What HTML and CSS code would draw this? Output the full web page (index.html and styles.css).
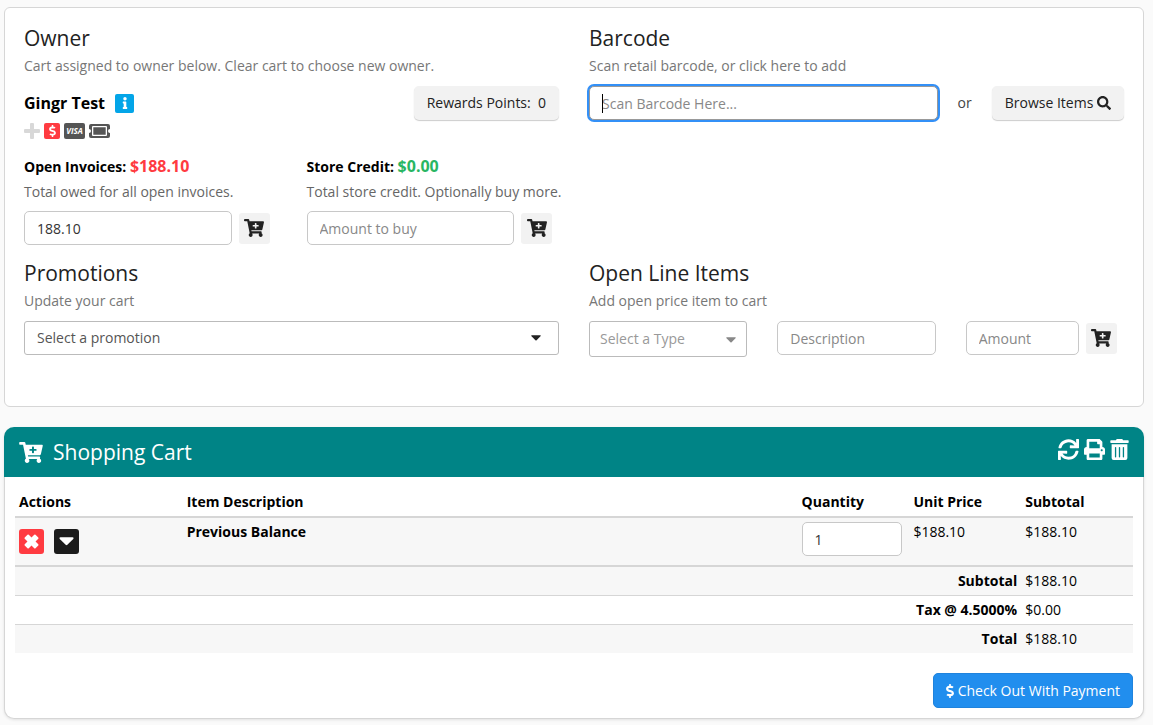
FILE: index.html
```html
<!DOCTYPE html>
<html lang="en">
<head>
    <meta charset="UTF-8">
    <meta name="viewport" content="width=device-width, initial-scale=1.0">
    <link rel="stylesheet" href="styles.css">
    <title>Point of Sale</title>
</head>
<body>
    <!-- icon sprite -->
    <svg class="sprite">
        <symbol id="cart-plus" viewBox="0 0 576 512"><path d="M504.717 320H211.572l6.545 32h268.418c15.401 0 26.816 14.301 23.403 29.319l-5.517 24.276C523.112 414.668 536 433.828 536 456c0 31.202-25.519 56.444-56.824 55.994-29.823-.429-54.35-24.631-55.155-54.447-.44-16.287 6.085-31.049 16.803-41.548H231.176C241.553 426.165 248 440.326 248 456c0 31.813-26.528 57.431-58.67 55.938-28.54-1.325-51.751-24.385-53.251-52.917-1.158-22.034 10.436-41.455 28.051-51.586L93.883 64H24C10.745 64 0 53.255 0 40V24C0 10.745 10.745 0 24 0h102.529c11.401 0 21.228 8.021 23.513 19.19L159.208 64H551.99c15.401 0 26.816 14.301 23.403 29.319l-47.273 208C525.637 312.246 515.923 320 504.717 320zM408 168h-48v-40c0-8.837-7.163-16-16-16h-16c-8.837 0-16 7.163-16 16v40h-48c-8.837 0-16 7.163-16 16v16c0 8.837 7.163 16 16 16h48v40c0 8.837 7.163 16 16 16h16c8.837 0 16-7.163 16-16v-40h48c8.837 0 16-7.163 16-16v-16c0-8.837-7.163-16-16-16z"/></symbol>
        <symbol id="search" viewBox="0 0 512 512"><path d="M505 442.7L405.3 343c-4.5-4.5-10.6-7-17-7H372c27.6-35.3 44-79.7 44-128C416 93.1 322.9 0 208 0S0 93.1 0 208s93.1 208 208 208c48.3 0 92.7-16.4 128-44v16.3c0 6.4 2.5 12.5 7 17l99.7 99.7c9.4 9.4 24.6 9.4 33.9 0l28.3-28.3c9.4-9.4 9.4-24.6.1-34zM208 336c-70.7 0-128-57.2-128-128 0-70.7 57.2-128 128-128 70.7 0 128 57.2 128 128 0 70.7-57.2 128-128 128z"/></symbol>
        <symbol id="times" viewBox="0 0 16 16"><path d="M3.700.8q.7-.7 1.400 0L8 3.700 10.900.8q.7-.7 1.400 0l2.900 2.900q.7.7 0 1.400L12.300 8l2.900 2.900q.7.7 0 1.400l-2.900 2.900q-.7.7-1.400 0L8 12.300l-2.900 2.900q-.7.7-1.400 0L.8 12.300q-.7-.7 0-1.400L3.700 8 .8 5.100q-.7-.7 0-1.400z"/></symbol>
        <symbol id="dollar" viewBox="0 0 288 512"><path d="M209.2 233.4l-108-31.6C88.7 198.2 80 186.5 80 173.5c0-16.3 13.2-29.5 29.5-29.5h66.3c12.2 0 24.2 3.7 34.2 10.5 6.1 4.1 14.3 3.1 19.5-2l34.8-34c7.1-6.9 6.1-18.4-1.8-24.5C238 74.8 207.4 64.1 176 64V16c0-8.8-7.2-16-16-16h-32c-8.8 0-16 7.2-16 16v48h-2.5C45.8 64-5.4 118.7.5 183.6c4.2 46.1 39.4 83.6 83.8 96.6l102.5 30c12.5 3.7 21.2 15.3 21.2 28.3 0 16.3-13.2 29.5-29.5 29.5h-66.3C100 368 88 364.3 78 357.5c-6.1-4.1-14.3-3.1-19.5 2l-34.8 34c-7.1 6.9-6.1 18.4 1.8 24.5 24.5 19.2 55.1 29.9 86.5 30v48c0 8.8 7.2 16 16 16h32c8.8 0 16-7.2 16-16v-48.2c46.6-.9 90.3-28.6 105.7-72.7 21.5-61.6-14.6-124.8-72.5-141.7z"/></symbol>
        <symbol id="info" viewBox="0 0 192 512"><path d="M20 424.229h20V279.771H20c-11.046 0-20-8.954-20-20V212c0-11.046 8.954-20 20-20h112c11.046 0 20 8.954 20 20v212.229h20c11.046 0 20 8.954 20 20V492c0 11.046-8.954 20-20 20H20c-11.046 0-20-8.954-20-20v-47.771c0-11.046 8.954-20 20-20zM96 0C56.235 0 24 32.235 24 72s32.235 72 72 72 72-32.235 72-72S135.764 0 96 0z"/></symbol>
        <symbol id="print" viewBox="0 0 512 512"><path d="M448 192V77.25c0-8.49-3.37-16.62-9.37-22.63L393.37 9.37c-6-6-14.14-9.37-22.63-9.37H96C78.33 0 64 14.33 64 32v160c-35.35 0-64 28.65-64 64v112c0 8.84 7.16 16 16 16h48v96c0 17.67 14.33 32 32 32h320c17.67 0 32-14.33 32-32v-96h48c8.84 0 16-7.16 16-16V256c0-35.35-28.65-64-64-64zm-64 256H128v-96h256v96zm0-224H128V64h192v48c0 8.84 7.16 16 16 16h48v96zm48 72c-13.25 0-24-10.75-24-24 0-13.26 10.75-24 24-24s24 10.74 24 24c0 13.25-10.75 24-24 24z"/></symbol>
        <symbol id="trash" viewBox="0 0 448 512"><path d="M32 464a48 48 0 0 0 48 48h288a48 48 0 0 0 48-48V128H32zm272-256a16 16 0 0 1 32 0v224a16 16 0 0 1-32 0zm-96 0a16 16 0 0 1 32 0v224a16 16 0 0 1-32 0zm-96 0a16 16 0 0 1 32 0v224a16 16 0 0 1-32 0zM432 32H312l-9.4-18.7A24 24 0 0 0 281.1 0H166.8a23.72 23.72 0 0 0-21.4 13.3L136 32H16A16 16 0 0 0 0 48v32a16 16 0 0 0 16 16h416a16 16 0 0 0 16-16V48a16 16 0 0 0-16-16z"/></symbol>
        <symbol id="sync" viewBox="0 0 512 512"><path d="M440.65 12.57l4 82.77A247.16 247.16 0 0 0 255.83 8C134.73 8 33.91 94.92 12.29 209.82A12 12 0 0 0 24.09 224h49.05a12 12 0 0 0 11.67-9.26 175.91 175.91 0 0 1 317-56.94l-101.46-4.86a12 12 0 0 0-12.57 12v47.41a12 12 0 0 0 12 12H500a12 12 0 0 0 12-12V12a12 12 0 0 0-12-12h-47.37a12 12 0 0 0-11.98 12.57zM255.83 432a175.61 175.61 0 0 1-146-77.8l101.8 4.87a12 12 0 0 0 12.57-12v-47.4a12 12 0 0 0-12-12H12a12 12 0 0 0-12 12V500a12 12 0 0 0 12 12h47.35a12 12 0 0 0 12-12.6l-4.15-82.57A247.17 247.17 0 0 0 255.83 504c121.11 0 221.93-86.92 243.55-201.82a12 12 0 0 0-11.8-14.18h-49.05a12 12 0 0 0-11.67 9.26A175.86 175.86 0 0 1 255.83 432z"/></symbol>
        <symbol id="caret" viewBox="0 0 16 9"><path d="M1.5 0h13c1 0 1.400 1 .7 1.700l-6.300 6.300c-.6.600-1.200.600-1.800 0L.8 1.700C.1 1 .5 0 1.500 0z"/></symbol>
        <symbol id="plus" viewBox="0 0 16 16"><path d="M6 1q0-1 1-1h2q1 0 1 1v5h5q1 0 1 1v2q0 1-1 1h-5v5q0 1-1 1H7q-1 0-1-1v-5H1q-1 0-1-1V7q0-1 1-1h5z"/></symbol>
        <symbol id="ticket" viewBox="0 0 21 14"><path fill-rule="evenodd" d="M2 0h17q2 0 2 2v3a2 2 0 0 0 0 4v3q0 2-2 2H2q-2 0-2-2V9a2 2 0 0 0 0-4V2q0-2 2-2zM4 2q-1 0-1 1v8q0 1 1 1h13q1 0 1-1V3q0-1-1-1zM4.300 3.300h12.400v7.400H4.300z"/></symbol>
    </svg>

    <div class="panel owner-panel">
        <section>
            <h2>Owner</h2>
            <p class="hint">Cart assigned to owner below. Clear cart to choose new owner.</p>
            <div class="owner-row">
                <div class="owner-name">
                    <strong>Gingr Test</strong>
                    <button class="info-button" aria-label="Owner info"><svg><use href="#info"/></svg></button>
                </div>
                <button class="button">Rewards Points: &nbsp;0</button>
            </div>
            <div class="owner-icons">
                <svg class="icon-plus"><use href="#plus"/></svg>
                <span class="icon-dollar"><svg><use href="#dollar"/></svg></span>
                <span class="icon-visa">VISA</span>
                <svg class="icon-ticket"><use href="#ticket"/></svg>
            </div>
            <div class="balances">
                <div>
                    <label class="balance-label" for="invoices">Open Invoices: <span class="owed">$188.10</span></label>
                    <p class="hint dark">Total owed for all open invoices.</p>
                    <div class="field-group">
                        <input class="field" id="invoices" type="text" value="188.10">
                        <button class="add-button" aria-label="Pay invoices"><svg><use href="#cart-plus"/></svg></button>
                    </div>
                </div>
                <div>
                    <label class="balance-label" for="credit">Store Credit: <span class="credit">$0.00</span></label>
                    <p class="hint dark">Total store credit. Optionally buy more.</p>
                    <div class="field-group">
                        <input class="field" id="credit" type="text" placeholder="Amount to buy">
                        <button class="add-button" aria-label="Buy credit"><svg><use href="#cart-plus"/></svg></button>
                    </div>
                </div>
            </div>
        </section>

        <section>
            <h2>Barcode</h2>
            <p class="hint">Scan retail barcode, or click here to add</p>
            <div class="barcode-row">
                <div class="barcode-field">
                    <input class="field active" type="text" placeholder="Scan Barcode Here..." aria-label="Barcode">
                </div>
                <span>or</span>
                <button class="button">Browse Items <svg class="icon-search"><use href="#search"/></svg></button>
            </div>
        </section>

        <section>
            <h2>Promotions</h2>
            <p class="hint">Update your cart</p>
            <div class="select-box promotion">
                <select class="field" aria-label="Promotion">
                    <option>Select a promotion</option>
                </select>
                <svg class="caret"><use href="#caret"/></svg>
            </div>
        </section>

        <section>
            <h2>Open Line Items</h2>
            <p class="hint">Add open price item to cart</p>
            <div class="line-items">
                <div class="select-box item-type">
                    <select class="field" aria-label="Type">
                        <option>Select a Type</option>
                    </select>
                    <svg class="caret"><use href="#caret"/></svg>
                </div>
                <input class="field" type="text" placeholder="Description" aria-label="Description">
                <div class="field-group">
                    <input class="field" type="text" placeholder="Amount" aria-label="Amount">
                    <button class="add-button" aria-label="Add item"><svg><use href="#cart-plus"/></svg></button>
                </div>
            </div>
        </section>
    </div>

    <div class="panel cart-panel">
        <div class="cart-header">
            <svg class="cart-icon"><use href="#cart-plus"/></svg>
            <h2>Shopping Cart</h2>
            <div class="cart-tools">
                <button aria-label="Refresh"><svg><use href="#sync"/></svg></button>
                <button aria-label="Print"><svg><use href="#print"/></svg></button>
                <button aria-label="Clear cart"><svg class="trash"><use href="#trash"/></svg></button>
            </div>
        </div>
        <div class="cart-body">
            <table class="cart-table">
                <thead>
                    <tr>
                        <th class="col-actions">Actions</th>
                        <th>Item Description</th>
                        <th class="col-small">Quantity</th>
                        <th class="col-small">Unit Price</th>
                        <th class="col-small">Subtotal</th>
                    </tr>
                </thead>
                <tbody>
                    <tr class="item">
                        <td>
                            <div class="actions">
                                <button class="remove" aria-label="Remove"><svg><use href="#times"/></svg></button>
                                <button class="more" aria-label="More"><svg><use href="#caret"/></svg></button>
                            </div>
                        </td>
                        <td><strong>Previous Balance</strong></td>
                        <td><input class="field quantity" type="text" value="1" aria-label="Quantity"></td>
                        <td>$188.10</td>
                        <td>$188.10</td>
                    </tr>
                </tbody>
                <tfoot>
                    <tr class="shaded">
                        <th colspan="4">Subtotal</th>
                        <td>$188.10</td>
                    </tr>
                    <tr>
                        <th colspan="4">Tax @ 4.5000%</th>
                        <td>$0.00</td>
                    </tr>
                    <tr class="shaded">
                        <th colspan="4">Total</th>
                        <td>$188.10</td>
                    </tr>
                </tfoot>
            </table>
            <div class="checkout-row">
                <button class="checkout"><svg><use href="#dollar"/></svg> Check Out With Payment</button>
            </div>
        </div>
    </div>
</body>
</html>
```

FILE: styles.css
```css
* {
    box-sizing: border-box;
}
body {
    margin: 0;
    padding: 7px 9px 6px 4px;
    background: #fafafa;
    color: #222;
    font-family: "Open Sans", sans-serif;
    font-size: 14px;
    line-height: 20px;
}
svg {
    fill: currentColor;
}
.sprite {
    display: none;
}
h2 {
    margin: 0;
    font-size: 21px;
    line-height: 30px;
    font-weight: 400;
}
button,
input,
select {
    margin: 0;
    font: inherit;
    color: inherit;
}
button {
    border: 0;
    padding: 0;
    cursor: pointer;
}
.panel {
    background: #fff;
    border: 1px solid #d6d6d6;
    border-radius: 6px;
}

/* owner / barcode / promotions */
.owner-panel {
    display: grid;
    grid-template-columns: 1fr 1fr;
    gap: 13px 30px;
    padding: 15px 19px 49px;
    margin-bottom: 20px;
}
.hint {
    margin: 3px 0 10px;
    color: #777;
}
.hint.dark {
    margin: 5px 0 9px;
    color: #666;
    white-space: nowrap;
}
.owner-row {
    display: flex;
    justify-content: space-between;
    align-items: center;
}
.owner-name {
    display: flex;
    align-items: center;
    gap: 10px;
    font-size: 16px;
    color: #000;
}
.info-button {
    display: flex;
    align-items: center;
    justify-content: center;
    width: 19px;
    height: 19px;
    border-radius: 2px;
    background: #03a5e8;
    color: #fff;
}
.info-button svg {
    width: 6px;
    height: 12px;
}
.button {
    height: 34px;
    padding: 0 13px;
    border-radius: 5px;
    background: #f2f2f2;
    box-shadow: 0 1px 1px rgba(0, 0, 0, 0.2);
    color: #222;
}
.icon-search {
    width: 14px;
    height: 14px;
    vertical-align: -2px;
}
.owner-icons {
    display: flex;
    align-items: center;
    gap: 4px;
    height: 16px;
    margin: 3px 0 17px;
    color: #555;
}
.icon-plus {
    width: 16px;
    height: 16px;
    color: #d8d8d8;
}
.icon-dollar {
    display: flex;
    align-items: center;
    justify-content: center;
    width: 16px;
    height: 16px;
    border-radius: 2px;
    background: #ff3b41;
    color: #fff;
}
.icon-dollar svg {
    width: 7px;
    height: 12px;
}
.icon-visa {
    width: 21px;
    height: 16px;
    border-radius: 2px;
    background: #555;
    color: #fff;
    font-size: 8px;
    font-weight: 700;
    font-style: italic;
    line-height: 16px;
    text-align: center;
}
.icon-ticket {
    width: 21px;
    height: 14px;
}
.balances {
    display: grid;
    grid-template-columns: repeat(2, minmax(0, 1fr));
    gap: 30px;
}
.balance-label {
    display: block;
    color: #000;
    font-weight: 700;
}
.owed,
.credit {
    font-size: 16px;
}
.owed {
    color: #ff3b41;
}
.credit {
    color: #28b662;
}
.field {
    display: block;
    width: 100%;
    min-width: 0;
    height: 34px;
    padding: 0 12px;
    border: 1px solid #c8c8c8;
    border-radius: 5px;
    background: #fff;
    color: #333;
    outline: none;
}
.field::placeholder {
    color: #888;
    opacity: 1;
}
.field.active,
.field:focus {
    border-color: #999;
    box-shadow: 0 0 0 2px #3390f7;
}
.field-group {
    display: flex;
    align-items: center;
    gap: 7px;
    padding-right: 7px;
}
.field-group .field {
    flex: 1;
}
.add-button {
    display: flex;
    align-items: center;
    justify-content: center;
    width: 31px;
    height: 31px;
    border-radius: 3px;
    background: #f2f2f2;
    color: #222;
}
.add-button svg {
    width: 20px;
    height: 18px;
}
.barcode-row {
    display: flex;
    align-items: center;
    gap: 20px;
    color: #444;
}
.barcode-field {
    position: relative;
    flex: 1;
}
/* text cursor */
.barcode-field::before {
    content: "";
    position: absolute;
    top: 8px;
    left: 13px;
    width: 1px;
    height: 19px;
    background: #000;
}
.select-box {
    position: relative;
}
.select-box select {
    appearance: none;
    border-radius: 3px;
    border-color: #bbb;
    color: #555;
}
.caret {
    position: absolute;
    top: 14px;
    right: 18px;
    width: 10px;
    height: 6px;
    color: #222;
    pointer-events: none;
}
.item-type select {
    height: 36px;
    padding: 0 10px;
    color: #999;
}
.item-type .caret {
    top: 16px;
    right: 11px;
    color: #888;
}
.line-items {
    display: grid;
    grid-template-columns: repeat(3, 1fr);
    align-items: start;
    gap: 30px;
}

/* shopping cart */
.cart-panel {
    border-radius: 10px;
    border-top: 0;
    box-shadow: 0 1px 3px rgba(0, 0, 0, 0.1);
}
.cart-header {
    display: flex;
    align-items: center;
    gap: 10px;
    height: 50px;
    margin: 0 -1px;
    padding: 0 15px;
    border-radius: 10px 10px 0 0;
    background: #008486;
    color: #fff;
}
.cart-icon {
    width: 24px;
    height: 21px;
}
.cart-tools {
    display: flex;
    gap: 5px;
    margin: 0 0 6px auto;
}
.cart-tools button {
    display: flex;
    background: none;
}
.cart-tools svg {
    width: 21px;
    height: 21px;
}
.cart-tools .trash {
    width: 19px;
}
.cart-body {
    padding: 11px 10px 10px;
}
.cart-table {
    width: 100%;
    table-layout: fixed;
    border-collapse: separate;
    border-spacing: 0;
    color: #000;
}
.cart-table th,
.cart-table td {
    padding: 4px;
    text-align: left;
    vertical-align: top;
}
.col-actions {
    width: 15%;
}
.col-small {
    width: 10%;
}
.cart-table thead th,
.cart-table .item td {
    border-bottom: 2px solid #d6d6d6;
}
.item,
.shaded {
    background: #f7f7f7;
}
.cart-table tfoot th {
    text-align: right;
}
.cart-table tfoot th,
.cart-table tfoot td {
    border-bottom: 1px solid #d6d6d6;
}
.cart-table tfoot tr:last-child > * {
    border-bottom: 0;
}
.actions {
    display: flex;
    gap: 10px;
    padding-top: 7px;
}
.actions button {
    display: flex;
    align-items: center;
    justify-content: center;
    width: 25px;
    height: 25px;
    border-radius: 3px;
    color: #fff;
}
.remove {
    background: #ff3b41;
}
.remove svg {
    width: 15px;
    height: 15px;
}
.more {
    background: #1c1c1c;
}
.more svg {
    width: 15px;
    height: 9px;
}
.quantity {
    width: 100px;
    margin-bottom: 5px;
}
.checkout-row {
    display: flex;
    justify-content: flex-end;
    margin-top: 20px;
}
.checkout {
    height: 35px;
    padding: 0 12px;
    border-radius: 5px;
    border: 1px solid #1f83dd;
    background: #218eee;
    color: #fff;
}
.checkout svg {
    width: 8px;
    height: 14px;
    vertical-align: -2px;
}
```
